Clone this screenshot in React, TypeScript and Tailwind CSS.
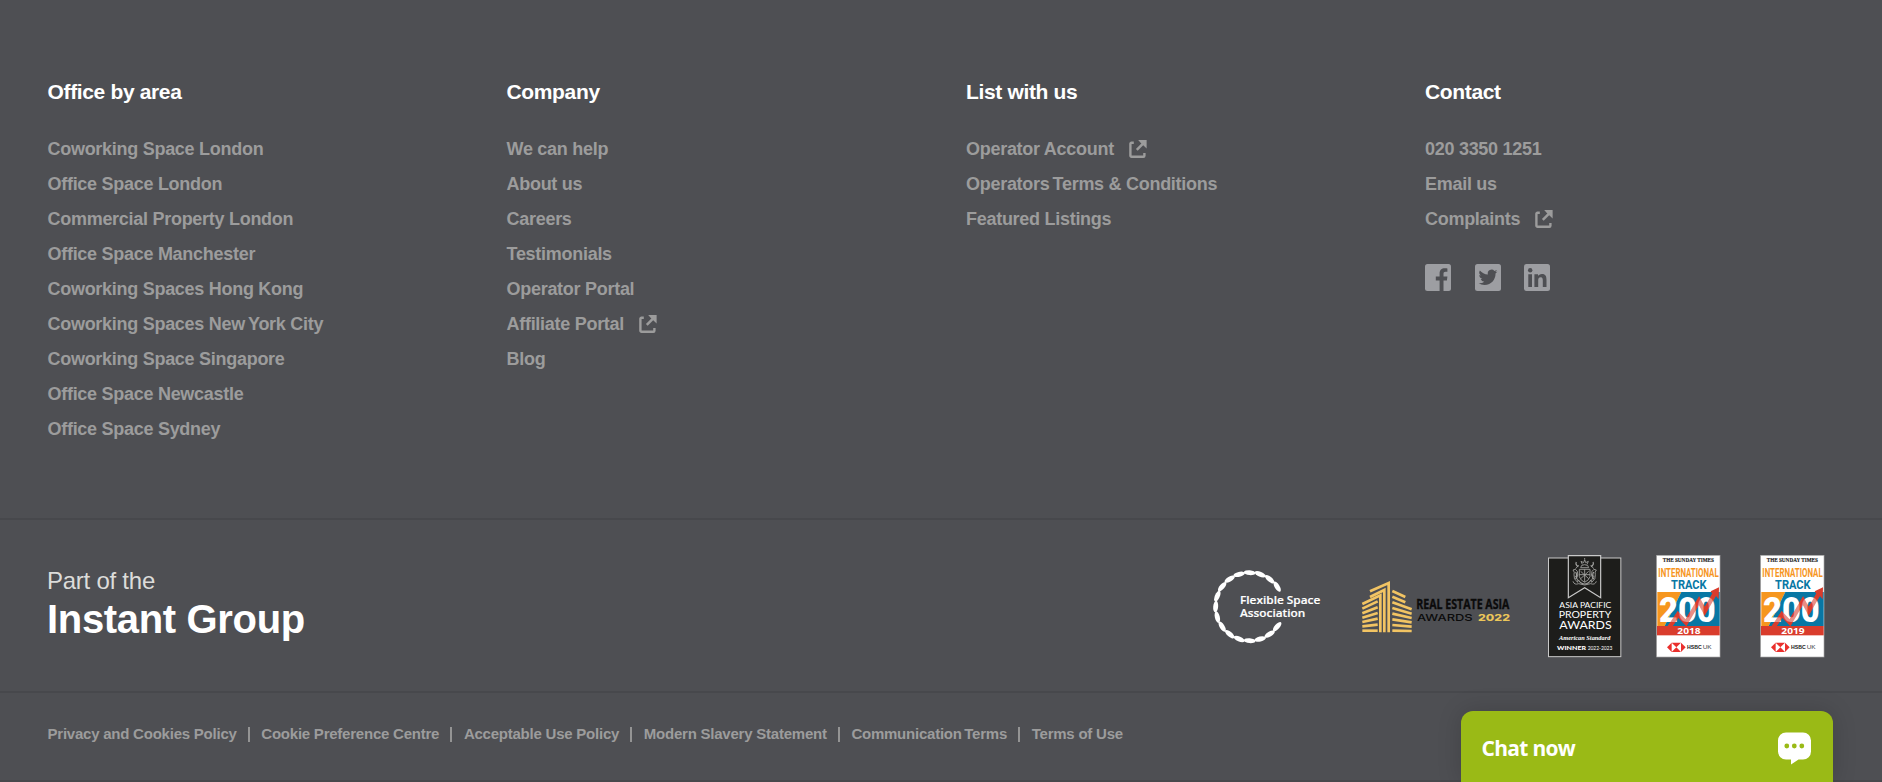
import type { ReactNode } from "react";

type LinkItem = { label: string; external?: boolean };

const columns: { title: string; links: LinkItem[] }[] = [
  {
    title: "Office by area",
    links: [
      { label: "Coworking Space London" },
      { label: "Office Space London" },
      { label: "Commercial Property London" },
      { label: "Office Space Manchester" },
      { label: "Coworking Spaces Hong Kong" },
      { label: "Coworking Spaces New York City" },
      { label: "Coworking Space Singapore" },
      { label: "Office Space Newcastle" },
      { label: "Office Space Sydney" },
    ],
  },
  {
    title: "Company",
    links: [
      { label: "We can help" },
      { label: "About us" },
      { label: "Careers" },
      { label: "Testimonials" },
      { label: "Operator Portal" },
      { label: "Affiliate Portal", external: true },
      { label: "Blog" },
    ],
  },
  {
    title: "List with us",
    links: [
      { label: "Operator Account", external: true },
      { label: "Operators Terms & Conditions" },
      { label: "Featured Listings" },
    ],
  },
  {
    title: "Contact",
    links: [{ label: "020 3350 1251" }, { label: "Email us" }, { label: "Complaints", external: true }],
  },
];

const legal = [
  "Privacy and Cookies Policy",
  "Cookie Preference Centre",
  "Acceptable Use Policy",
  "Modern Slavery Statement",
  "Communication Terms",
  "Terms of Use",
];

/* Tightens the word gap in front of a capital T or Y, whose shape leaves white below its arms. */
function Kerned({ text }: { text: string }) {
  const at = text.search(/ [TY]/);
  if (at < 0) return <span>{text}</span>;
  return (
    <span className="whitespace-pre">
      {text.slice(0, at)}
      <span className="tracking-[-0.11em]"> </span>
      {text.slice(at + 1)}
    </span>
  );
}

function ExternalIcon() {
  return (
    <svg className="mb-[2px] ml-[15px] h-[18px] w-[18px]" viewBox="0 0 18 18" fill="none" stroke="currentColor">
      <path d="M4.8 2.7H2.4a1 1 0 0 0-1 1v12a1 1 0 0 0 1 1h12a1 1 0 0 0 1-1v-2.6" strokeWidth="2.4" />
      <path d="M7.8 9.9 15 2.6" strokeWidth="2.6" />
      <path d="M9.2 0H17.6V8.4L15 6 11.6 2.7Z" fill="currentColor" stroke="none" />
    </svg>
  );
}

function Social({ children }: { children: ReactNode }) {
  return (
    <svg className="h-[27px] w-[26px]" viewBox="0 0 26 27">
      <rect width="26" height="27" rx="2.5" fill="#9d9ea2" />
      {children}
    </svg>
  );
}

function Socials() {
  return (
    <div className="mt-[27px] flex gap-[23.5px]">
      <Social>
        <path
          fill="#4e4f53"
          d="M14.6 27V16.4h-3.8v-3.9h3.8V9.6c0-3.6 2-5.3 5.2-5.3 1.3 0 2.2.1 2.6.2v3.3h-1.8c-1.6 0-2.1.8-2.1 2.1v2.6h3.9l-.5 3.9h-3.4V27Z"
        />
      </Social>
      <Social>
        <path
          fill="#4e4f53"
          transform="translate(3.6 3.9) scale(.785)"
          d="M23.95 4.57a10 10 0 0 1-2.82.77 4.96 4.96 0 0 0 2.16-2.72c-.95.55-2 .96-3.13 1.18a4.92 4.92 0 0 0-8.38 4.48C7.69 8.1 4.07 6.13 1.64 3.16a4.92 4.92 0 0 0 1.52 6.57 4.9 4.9 0 0 1-2.23-.61v.06a4.92 4.92 0 0 0 3.95 4.83 5 5 0 0 1-2.21.08 4.94 4.94 0 0 0 4.6 3.42A9.87 9.87 0 0 1 0 19.54a13.99 13.99 0 0 0 7.55 2.21c9.05 0 14-7.5 14-13.98 0-.21 0-.42-.02-.63a9.94 9.94 0 0 0 2.42-2.57Z"
        />
      </Social>
      <Social>
        <circle cx="6.2" cy="6.3" r="2.2" fill="#4e4f53" />
        <path
          fill="#4e4f53"
          d="M4.3 10.3h3.7V23H4.3ZM10.4 10.3H14v1.8c.6-1.1 2-2.1 3.9-2.1 3.9 0 4.6 2.6 4.6 5.9V23h-3.7v-6.3c0-1.5 0-3.4-2.1-3.4s-2.5 1.6-2.5 3.3V23h-3.8Z"
        />
      </Social>
    </div>
  );
}

type LineProps = {
  x: number;
  y: number;
  w: number;
  size: number;
  children: string;
  fill?: string;
  weight?: number;
  family?: string;
  italic?: boolean;
  stroke?: number;
};

function Line({ x, y, w, size, children, fill = "#fff", weight = 400, family = "Lato", italic, stroke }: LineProps) {
  return (
    <text
      x={x}
      y={y}
      textLength={w}
      lengthAdjust="spacingAndGlyphs"
      fontSize={size}
      fill={fill}
      fontWeight={weight}
      fontFamily={`"${family}", sans-serif`}
      fontStyle={italic ? "italic" : "normal"}
      stroke={stroke ? fill : "none"}
      strokeWidth={stroke}
    >
      {children}
    </text>
  );
}

const petals = Array.from({ length: 17 }, (_, i) => 36 + i * 18);

function FlexibleSpaceLogo() {
  return (
    <svg className="h-[108px] w-[120px] overflow-visible" viewBox="15 36 360 324">
      {petals.map((a) => (
        <ellipse
          key={a}
          cx={149}
          cy={98}
          rx={17.5}
          ry={7.4}
          fill="#fff"
          transform={`rotate(${90 - a} 149 200) rotate(5 149 98)`}
        />
      ))}
      <Line x={120} y={193} w={241} size={34} weight={600} family="Open Sans" stroke={0.5}>Flexible Space</Line>
      <Line x={120} y={231} w={196} size={34} weight={600} family="Open Sans" stroke={0.5}>Association</Line>
    </svg>
  );
}

const leftBars = [
  [101, 79],
  [115, 97],
  [128, 114],
  [141, 131],
  [154, 149],
  [167, 167],
];
const rightBars = [
  [48, 66, 151],
  [65, 82, 151],
  [82, 103, 170],
  [99, 116, 170],
  [116, 129, 170],
  [133, 142, 170],
  [150, 155, 170],
  [167, 168, 170],
];

function RealEstateAsiaLogo() {
  return (
    <svg className="h-[108px] w-[160px] overflow-visible" viewBox="0 -69 480 324">
      <g stroke="#f2c463" strokeWidth="8" fill="none">
        <path d="M45 49 101 24V172" />
        <path d="M45 66 88 45V172" />
        <path d="M22 87 76 61V172" />
        {leftBars.map(([a, b]) => (
          <path key={a} d={`M22 ${a}L68 ${b}`} />
        ))}
        {rightBars.map(([a, b, x]) => (
          <path key={a} d={`M112 ${a}L${x} ${b}`} />
        ))}
      </g>
      <Line x={184} y={102} w={279} size={40} weight={700} fill="#0b0b0b" family="Open Sans" stroke={1}>REAL ESTATE ASIA</Line>
      <Line x={186} y={137} w={167} size={28} fill="#0b0b0b" weight={500} family="Inter">AWARDS</Line>
      <Line x={369} y={137} w={96} size={28} fill="#ecc65a" weight={800} family="Inter">2022</Line>
    </svg>
  );
}

function AsiaPacificLogo() {
  return (
    <svg className="h-[108px] w-[80px] overflow-visible" viewBox="0 0 240 324">
      <rect x="10.5" y="18" width="217" height="296" fill="#1d1d1b" stroke="#c9c9c9" strokeWidth="3" />
      <path d="M70 11H167V137L119 107 70 137Z" fill="#1d1d1b" stroke="#c9c9c9" strokeWidth="3.5" />
      <g fill="none" stroke="#a3a3a1" strokeWidth="2.6">
        <path d="M103 52h32v22q-3 11-16 17-13-6-16-17ZM119 52V90M103 68h32M107 58l24 22M131 58l-24 22" />
        <path d="M97 90q-12-8-10-22 3-8-3-14 8-6 13 4 4 12-2 20 5 6 3 14M141 90q12-8 10-22-3-8 3-14-8-6-13 4-4 12 2 20-5 6-3 14" />
        <path d="M107 47q0-9 12-9t12 9ZM112 37l-4-9 8 4 3-9 3 9 8-4-4 9M119 22v-4" />
        <path d="M84 88q4 12 17 7 18 8 36 0 13 5 17-7M92 50l9-11M146 50l-9-11M90 74l8-5M148 74l-8-5" />
        <path d="M92 60q6 10 0 22M146 60q-6 10 0 22M100 84q8 12 19 12t19-12M100 44q-10-6-6-14M138 44q10-6 6-14" strokeWidth="3.5" />
      </g>
      <Line x={43} y={167} w={156} size={24.5}>ASIA PACIFIC</Line>
      <Line x={41} y={198} w={158} size={30}>PROPERTY</Line>
      <Line x={43} y={232} w={157} size={32}>AWARDS</Line>
      <Line x={42} y={264} w={154} size={20} weight={700} family="Liberation Serif" italic>American Standard</Line>
      <Line x={36} y={295} w={87} size={16} weight={900}>WINNER</Line>
      <Line x={128} y={295} w={74} size={17}>2022-2023</Line>
    </svg>
  );
}

const arrow = "M58 226 84 187 108 212 147 146 164 178 196 122";

function TrackLogo({ year }: { year: string }) {
  return (
    <svg className="h-[108px] w-[76px] overflow-visible" viewBox="0 0 228 324">
      <rect x="20" y="10" width="190" height="305" fill="#fff" stroke="#a9a9a9" strokeWidth="2" />
      <Line x={38} y={30} w={154} size={17} weight={700} family="Liberation Serif" fill="#222" stroke={0.4}>THE SUNDAY TIMES</Line>
      <Line x={25} y={75} w={181} size={41} weight={700} family="Roboto" fill="#f6961e">INTERNATIONAL</Line>
      <Line x={63} y={112} w={107} size={41} weight={700} family="Roboto" fill="#0877a4">TRACK</Line>
      <path d="M22 120H94L44 222H22Z" fill="#f6961e" />
      <path d="M94 120H209V222H44Z" fill="#0877a4" />
      <path d={arrow} fill="none" stroke="#d93c2c" strokeWidth="13" />
      <Line x={27} y={209} w={170} size={103} weight={900} family="Roboto">200</Line>
      <path d={arrow} fill="none" stroke="#d93c2c" strokeWidth="13" opacity=".58" />
      <path d="M207 106 206 142 198 132 189 128 182 118Z" fill="#d93c2c" />
      <rect x="21" y="222" width="188" height="28" fill="#d93c2c" />
      <Line x={82} y={245} w={70} size={25} weight={700} family="Open Sans">{year}</Line>
      <path d="M51 286 65 272H93L107 286 93 300H65Z" fill="#ea2f2c" />
      <path d="M65 272 79 286 65 300ZM93 272 79 286 93 300Z" fill="#fff" />
      <Line x={111} y={291.5} w={44} size={15} weight={700} family="Liberation Sans" fill="#222">HSBC</Line>
      <Line x={158} y={291.5} w={27} size={15} family="Liberation Sans" fill="#444">UK</Line>
    </svg>
  );
}

export default function App() {
  return (
    <footer className="relative flex h-[782px] w-full flex-col overflow-hidden bg-[#4e4f53] font-['Liberation_Sans',Arial,sans-serif] text-[#9c9c9c]">
      <div className="grid h-[518px] w-[1884px] grid-cols-[459px_459.5px_459px_1fr] pt-20 pl-[47.5px]">
        {columns.map((col) => (
          <section key={col.title}>
            <h2 className="text-[21px] leading-6 font-bold tracking-[-0.35px] text-white">{col.title}</h2>
            <ul className="mt-7">
              {col.links.map((l) => (
                <li
                  key={l.label}
                  className="flex h-[35px] items-center text-[18px] leading-[35px] font-bold tracking-[-0.28px] whitespace-nowrap"
                >
                  <Kerned text={l.label} />
                  {l.external && <ExternalIcon />}
                </li>
              ))}
            </ul>
            {col.title === "Contact" && <Socials />}
          </section>
        ))}
      </div>

      <div className="flex h-[175px] items-center justify-between border-y-2 border-[#47484c] pr-[52px] pl-[47px]">
        <div className="pb-[3px]">
          <p className="text-[24px] leading-[30px] tracking-[-0.25px] text-[#dcdcda]">Part of the</p>
          <p className="text-[40px] leading-[46px] font-bold tracking-[-0.33px] text-white">Instant Group</p>
        </div>
        <div className="flex items-center">
          <FlexibleSpaceLogo />
          <div className="ml-[30px] flex">
            <RealEstateAsiaLogo />
          </div>
          <div className="ml-[30px] flex">
            <AsiaPacificLogo />
          </div>
          <div className="ml-[25px] flex gap-7">
            <TrackLogo year="2018" />
            <TrackLogo year="2019" />
          </div>
        </div>
      </div>

      <div className="flex h-[89px] border-b-2 border-[#47484c] pt-[29px] pl-[47.5px]">
        {legal.map((label, i) => (
          <div key={label} className="flex text-[15px] leading-6 font-bold tracking-[-0.23px] whitespace-nowrap">
            {i > 0 && <span className="mt-[5px] mr-[11.5px] ml-[11.2px] h-[15px] w-[2px] bg-[#949494]" />}
            <Kerned text={label} />
          </div>
        ))}
      </div>

      <button className="absolute bottom-0 left-[1461px] flex h-[71px] w-[372px] items-center justify-between rounded-t-xl bg-[#9aba16] pr-[22px] pl-[20.5px] shadow-[0_0_24px_rgba(0,0,0,0.16)]">
        <span className="pt-[3px] font-['Open_Sans','Noto_Sans',sans-serif] text-[21px] leading-8 font-bold tracking-[-0.7px] text-white">
          Chat now
        </span>
        <svg className="mt-[3px] h-[33px] w-[33px]" viewBox="0 0 33 33">
          <path
            fill="#fff"
            d="M8 .5h17a8 8 0 0 1 8 8v11a8 8 0 0 1-8 8h-4.5L13 32.5V27.5H8a8 8 0 0 1-8-8v-11a8 8 0 0 1 8-8Z"
          />
          <g fill="#9aba16">
            <circle cx="8.8" cy="14" r="2.4" />
            <circle cx="16.3" cy="14" r="2.4" />
            <circle cx="23.8" cy="14" r="2.4" />
          </g>
        </svg>
      </button>
    </footer>
  );
}
